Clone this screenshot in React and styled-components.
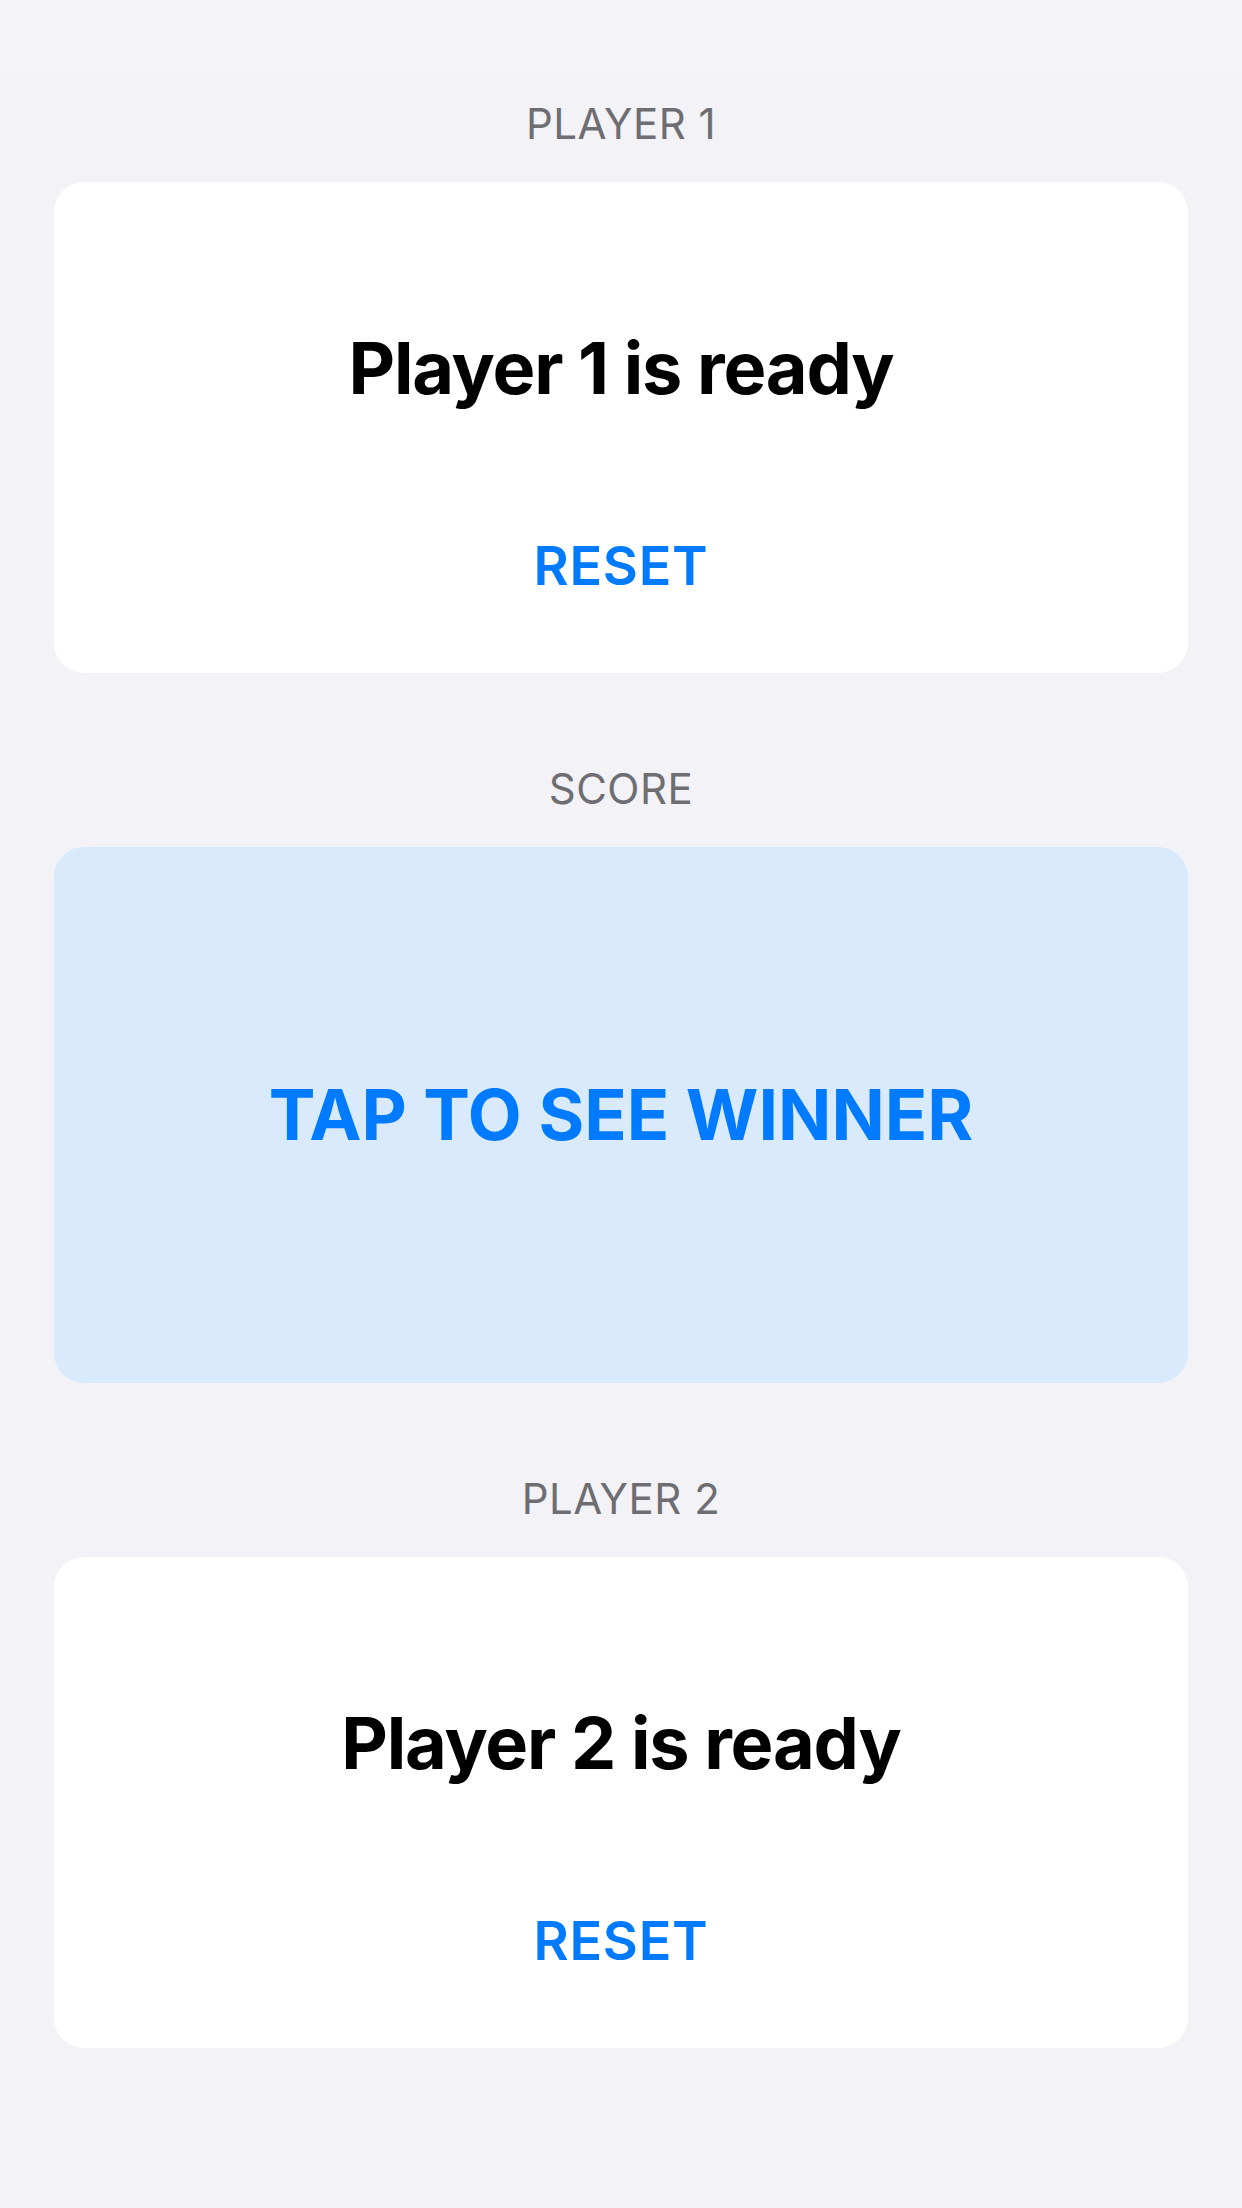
import React, { useState } from 'react';
import styled, { createGlobalStyle } from 'styled-components';

const GlobalStyle = createGlobalStyle`
    * {
        box-sizing: border-box;
    }
    body {
        margin: 0;
        background: #F2F2F7;
        font-family: Inter, "Noto Sans", sans-serif;
        -webkit-font-smoothing: antialiased;
    }
`;

export default function App() {
    const [revealed, setRevealed] = useState(false);

    const players = [
        { id: 1, label: 'PLAYER 1', status: 'Player 1 is ready' },
        { id: 2, label: 'PLAYER 2', status: 'Player 2 is ready' },
    ];

    return (
        <Page>
            <GlobalStyle />
            <TopBar />
            <Content>
                <Section>
                    <SectionLabel>{players[0].label}</SectionLabel>
                    <PlayerCard>
                        <Status>{players[0].status}</Status>
                        <ResetButton>RESET</ResetButton>
                    </PlayerCard>
                </Section>

                <Section>
                    <SectionLabel>SCORE</SectionLabel>
                    <ScoreCard onClick={() => setRevealed(!revealed)}>
                        <ScoreText>{revealed ? 'IT\'S A TIE' : 'TAP TO SEE WINNER'}</ScoreText>
                    </ScoreCard>
                </Section>

                <Section>
                    <SectionLabel>{players[1].label}</SectionLabel>
                    <PlayerCard>
                        <Status>{players[1].status}</Status>
                        <ResetButton>RESET</ResetButton>
                    </PlayerCard>
                </Section>
            </Content>
        </Page>
    );
}

const Page = styled.div`
    min-height: 2208px;
    background: #F2F2F7;
`;

const TopBar = styled.div`
    height: 70px;
    background: #F5F4F9;
`;

const Content = styled.div`
    display: flex;
    flex-direction: column;
    gap: 95px;
    padding: 33px 54px 0;
`;

const Section = styled.div`
    display: flex;
    flex-direction: column;
    gap: 37px;
`;

//==================== 섹션 타이틀 ====================
const SectionLabel = styled.div`
    color: #6D6D72;
    font-size: 42px;
    font-weight: 400;
    line-height: 42px;
    letter-spacing: 0.5px;
    text-align: center;
`;

//==================== 카드 ====================
const PlayerCard = styled.div`
    display: flex;
    flex-direction: column;
    align-items: center;
    height: 491px;
    padding: 150px 0 80px;
    background: #FFF;
    border-radius: 30px;
`;

const Status = styled.div`
    color: #000;
    font-size: 72px;
    font-weight: 700;
    line-height: 72px;
    letter-spacing: -1.2px;
`;

const ResetButton = styled.button`
    margin-top: 135px;
    padding: 0;
    border: none;
    background: none;
    color: #007AFF;
    font-family: inherit;
    font-size: 54px;
    font-weight: 600;
    line-height: 54px;
    letter-spacing: 0.7px;
    cursor: pointer;
`;

const ScoreCard = styled.div`
    display: flex;
    align-items: center;
    justify-content: center;
    height: 536px;
    background: #D9EAFD;
    border-radius: 30px;
    cursor: pointer;
`;

const ScoreText = styled.div`
    color: #007AFF;
    font-size: 70px;
    font-weight: 700;
    line-height: 70px;
`;
